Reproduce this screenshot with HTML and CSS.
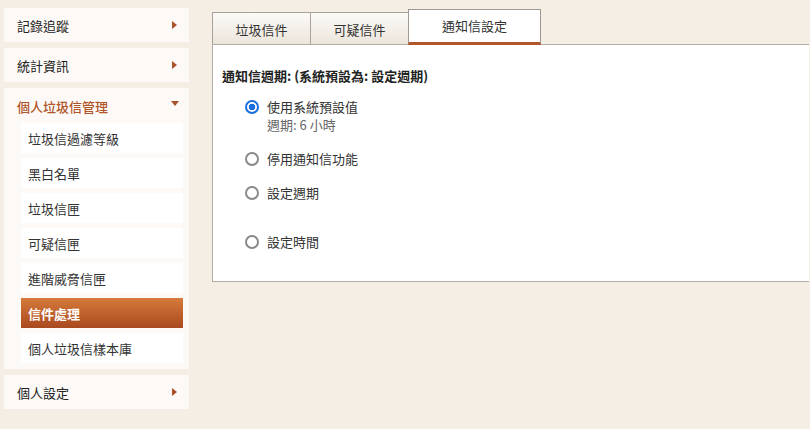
FILE: index.html
```html
<!DOCTYPE html>
<html lang="zh-Hant">
<head>
<meta charset="utf-8">
<title>通知信設定</title>
<link rel="stylesheet" href="styles.css">
</head>
<body>
<div class="layout">
  <nav class="sidebar">
    <div class="nav-item"><span>記錄追蹤</span><span class="arrow-right"></span></div>
    <div class="nav-item"><span>統計資訊</span><span class="arrow-right"></span></div>
    <div class="nav-group">
      <div class="nav-group-head"><span>個人垃圾信管理</span><span class="arrow-down"></span></div>
      <ul class="sub-list">
        <li class="sub-item">垃圾信過濾等級</li>
        <li class="sub-item">黑白名單</li>
        <li class="sub-item">垃圾信匣</li>
        <li class="sub-item">可疑信匣</li>
        <li class="sub-item">進階威脅信匣</li>
        <li class="sub-item active">信件處理</li>
        <li class="sub-item">個人垃圾信樣本庫</li>
      </ul>
    </div>
    <div class="nav-item"><span>個人設定</span><span class="arrow-right"></span></div>
  </nav>
  <main class="main">
    <div class="tabs">
      <div class="tab">垃圾信件</div>
      <div class="tab">可疑信件</div>
      <div class="tab tab-active">通知信設定</div>
    </div>
    <section class="panel">
      <h2 class="panel-title">通知信週期: (系統預設為: 設定週期)</h2>
      <div class="options">
        <label class="option opt-1">
          <input type="radio" name="period" checked>
          <span class="opt-text">使用系統預設值<span class="opt-note">週期: 6 小時</span></span>
        </label>
        <label class="option opt-2">
          <input type="radio" name="period">
          <span class="opt-text">停用通知信功能</span>
        </label>
        <label class="option opt-3">
          <input type="radio" name="period">
          <span class="opt-text">設定週期</span>
        </label>
        <label class="option opt-4">
          <input type="radio" name="period">
          <span class="opt-text">設定時間</span>
        </label>
      </div>
    </section>
  </main>
</div>
</body>
</html>
```

FILE: styles.css
```css
* { box-sizing: border-box; }
html, body { margin: 0; padding: 0; }
body {
  background: #f5eee4;
  font-family: "Noto Sans CJK TC", "Noto Sans", sans-serif;
  font-size: 13px;
  color: #333;
  width: 810px;
  height: 429px;
  overflow: hidden;
}
.layout {
  display: flex;
  align-items: flex-start;
  padding: 8px 0 0 4px;
}
.sidebar {
  width: 185px;
  display: flex;
  flex-direction: column;
  gap: 6px;
  flex: none;
}
.nav-item, .nav-group-head {
  display: flex;
  align-items: center;
  justify-content: space-between;
  height: 34px;
  padding: 1px 12px 0 13px;
  background: #fdf9f6;
  color: #222;
}
.nav-group { background: #fdf9f6; padding-bottom: 6px; }
.nav-group-head { color: #b0552a; height: 35px; padding-top: 2px; font-weight: 500; }
.arrow-right {
  width: 0; height: 0;
  border-top: 4.5px solid transparent;
  border-bottom: 4.5px solid transparent;
  border-left: 5px solid #a8502a;
  margin-top: -2px;
}
.arrow-down {
  width: 0; height: 0;
  border-left: 4.5px solid transparent;
  border-right: 4.5px solid transparent;
  border-top: 5px solid #a8502a;
  margin-right: -2px;
  margin-top: -6px;
}
.sub-list {
  list-style: none;
  margin: 0;
  padding: 0 6px 0 17px;
  display: flex;
  flex-direction: column;
  gap: 5px;
}
.sub-item {
  height: 30px;
  display: flex;
  align-items: center;
  padding-left: 7px;
  background: #fff;
  color: #333;
}
.sub-item.active {
  background: linear-gradient(#d67a3b, #a9491f);
  color: #fff;
  font-weight: bold;
}
.main {
  margin-left: 23px;
  width: 597px;
  flex: none;
  margin-top: 1px;
}
.tabs {
  display: flex;
  align-items: flex-end;
  height: 36px;
  border-bottom: 1px solid #b2aca4;
}
.tab {
  width: 99px;
  height: 32px;
  border: 1px solid #aaa39b;
  border-bottom: none;
  background: linear-gradient(#fcfaf7, #ebe5dc);
  display: flex;
  align-items: center;
  justify-content: center;
  color: #333;
  padding-top: 1px;
}
.tab + .tab { margin-left: -1px; }
.tab-active {
  width: 133px;
  height: 36px;
  background: #fff;
  border-color: #9f9992;
  border-bottom: 3px solid #b1552d;
  margin-bottom: -1px;
  padding-top: 0;
  padding-bottom: 2px;
}
.panel {
  background: #fff;
  border: 1px solid #b2aca4;
  border-top: none;
  border-right: none;
  height: 237px;
  padding: 22px 9px 0 9px;
}
.panel-title {
  margin: 0;
  font-size: 13px;
  font-weight: bold;
  color: #222;
  line-height: 18px;
}
.options { padding-left: 23px; }
.option {
  display: flex;
  align-items: flex-start;
  color: #333;
}
.option input {
  appearance: none;
  -webkit-appearance: none;
  margin: 2px 8px 0 0;
  width: 14px;
  height: 14px;
  border: 2px solid #8a8a8a;
  border-radius: 50%;
  background: #fff;
  flex: none;
}
.option input:checked {
  border-color: #1a6fdc;
  background: radial-gradient(circle, #1a6fdc 0 3px, #fff 3.6px);
}
.opt-text { line-height: 18px; display: flex; flex-direction: column; }
.opt-note { color: #666; }
.opt-1 { margin-top: 13px; }
.opt-2 { margin-top: 16px; }
.opt-3 { margin-top: 16px; }
.opt-4 { margin-top: 31px; }
```
